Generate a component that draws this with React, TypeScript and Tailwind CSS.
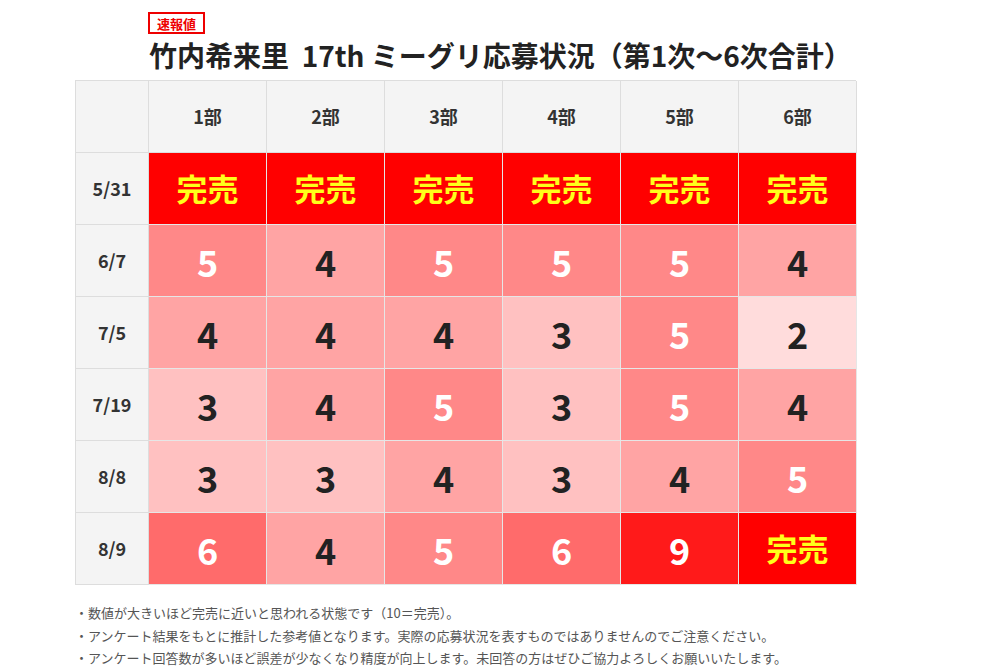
import * as React from "react"

const cols = ["1部", "2部", "3部", "4部", "5部", "6部"]

const rows: { date: string; values: number[] }[] = [
  { date: "5/31", values: [10, 10, 10, 10, 10, 10] },
  { date: "6/7", values: [5, 4, 5, 5, 5, 4] },
  { date: "7/5", values: [4, 4, 4, 3, 5, 2] },
  { date: "7/19", values: [3, 4, 5, 3, 5, 4] },
  { date: "8/8", values: [3, 3, 4, 3, 4, 5] },
  { date: "8/9", values: [6, 4, 5, 6, 9, 10] },
]

const cellStyle: Record<number, string> = {
  2: "bg-[#ffdcdc] text-[#222]",
  3: "bg-[#ffc1c1] text-[#222]",
  4: "bg-[#ffa4a4] text-[#222]",
  5: "bg-[#ff8888] text-white",
  6: "bg-[#ff6b6b] text-white",
  9: "bg-[#ff1a1a] text-white",
  10: "bg-[#ff0000] text-[#ffff1a]",
}

const notes = [
  "・数値が大きいほど完売に近いと思われる状態です（10＝完売）。",
  "・アンケート結果をもとに推計した参考値となります。実際の応募状況を表すものではありませんのでご注意ください。",
  "・アンケート回答数が多いほど誤差が少なくなり精度が向上します。未回答の方はぜひご協力よろしくお願いいたします。",
]

export default function App() {
  return (
    <div
      className="w-[1000px] h-[670px] bg-white overflow-hidden"
      style={{ fontFamily: '"Noto Sans CJK JP", "Noto Sans", sans-serif' }}
    >
      <div className="pl-[148px] pt-[12px]">
        <div className="flex w-fit h-[22px] items-center border-2 border-[#e00] px-[7px] text-[13px] font-bold leading-none text-[#e00]">
          速報値
        </div>
        <h1 className="mt-[2px] ml-[1px] text-[28px] font-bold leading-[38px] text-[#222] whitespace-pre">
          竹内希来里  17th ミーグリ応募状況（第1次〜6次合計）
        </h1>
      </div>

      {/* Table */}
      <div className="ml-[75px] mt-[6px] grid w-[781px] grid-cols-[73px_repeat(6,118px)] border-t border-l border-[#ddd]">
        <div className="h-[72px] border-r border-b border-[#ddd] bg-[#f4f4f4]" />
        {cols.map((c) => (
          <div
            key={c}
            className="flex h-[72px] items-center justify-center border-r border-b border-[#ddd] bg-[#f4f4f4] text-[18px] font-bold text-[#333]"
          >
            {c}
          </div>
        ))}
        {rows.map((r) => (
          <React.Fragment key={r.date}>
            <div className="flex h-[72px] items-center justify-center border-r border-b border-[#ddd] bg-[#f4f4f4] text-[18px] font-bold text-[#333]">
              {r.date}
            </div>
            {r.values.map((v, i) => (
              <div
                key={i}
                className={`flex h-[72px] items-center justify-center border-r border-b border-[#e6e6e6] font-bold ${cellStyle[v]} ${
                  v === 10 ? "text-[31px]" : "text-[36px]"
                }`}
              >
                {v === 10 ? "完売" : v}
              </div>
            ))}
          </React.Fragment>
        ))}
      </div>

      <div className="ml-[75px] mt-[17px] text-[13px] leading-[22.5px] text-[#555]">
        {notes.map((n) => (
          <p key={n}>{n}</p>
        ))}
      </div>
    </div>
  )
}
